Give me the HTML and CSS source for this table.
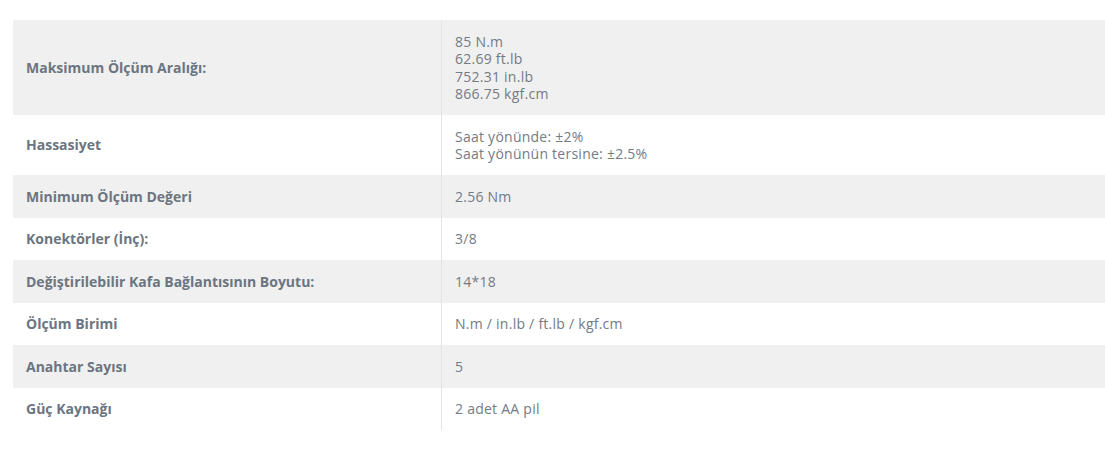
FILE: index.html
```html
<!DOCTYPE html>
<html lang="tr">
<head>
<meta charset="utf-8">
<link rel="stylesheet" href="styles.css">
</head>
<body>
<div class="wrap">
<table class="specs">
<tbody>
<tr><th>Maksimum Ölçüm Aralığı:</th><td>85 N.m<br>62.69 ft.lb<br>752.31 in.lb<br>866.75 kgf.cm</td></tr>
<tr><th>Hassasiyet</th><td>Saat yönünde: ±2%<br>Saat yönünün tersine: ±2.5%</td></tr>
<tr><th>Minimum Ölçüm Değeri</th><td>2.56 Nm</td></tr>
<tr><th>Konektörler (İnç):</th><td>3/8</td></tr>
<tr><th>Değiştirilebilir Kafa Bağlantısının Boyutu:</th><td>14*18</td></tr>
<tr><th>Ölçüm Birimi</th><td>N.m / in.lb / ft.lb / kgf.cm</td></tr>
<tr><th>Anahtar Sayısı</th><td>5</td></tr>
<tr><th>Güç Kaynağı</th><td>2 adet AA pil</td></tr>
</tbody>
</table>
</div>
</body>
</html>
```
FILE: styles.css
```css
html, body {
  margin: 0;
  padding: 0;
  background: #ffffff;
  overflow: hidden;
}
.wrap {
  padding: 20px 0 0 13px;
}
.specs {
  border-collapse: collapse;
  width: 1100px;
  table-layout: fixed;
  font-family: "Open Sans", "Liberation Sans", sans-serif;
  font-size: 14px;
  line-height: 17.5px;
}
.specs tr:nth-child(odd) {
  background: #f0f0f0;
}
.specs th {
  width: 402px;
  text-align: left;
  font-weight: 700;
  color: #6b7581;
  padding: 12.5px 13px;
  vertical-align: middle;
  border-right: 1px solid #e4e4e4;
}
.specs td {
  color: #737b85;
  font-weight: 400;
  letter-spacing: 0.25px;
  padding: 12.5px 13px;
  vertical-align: middle;
}
```
